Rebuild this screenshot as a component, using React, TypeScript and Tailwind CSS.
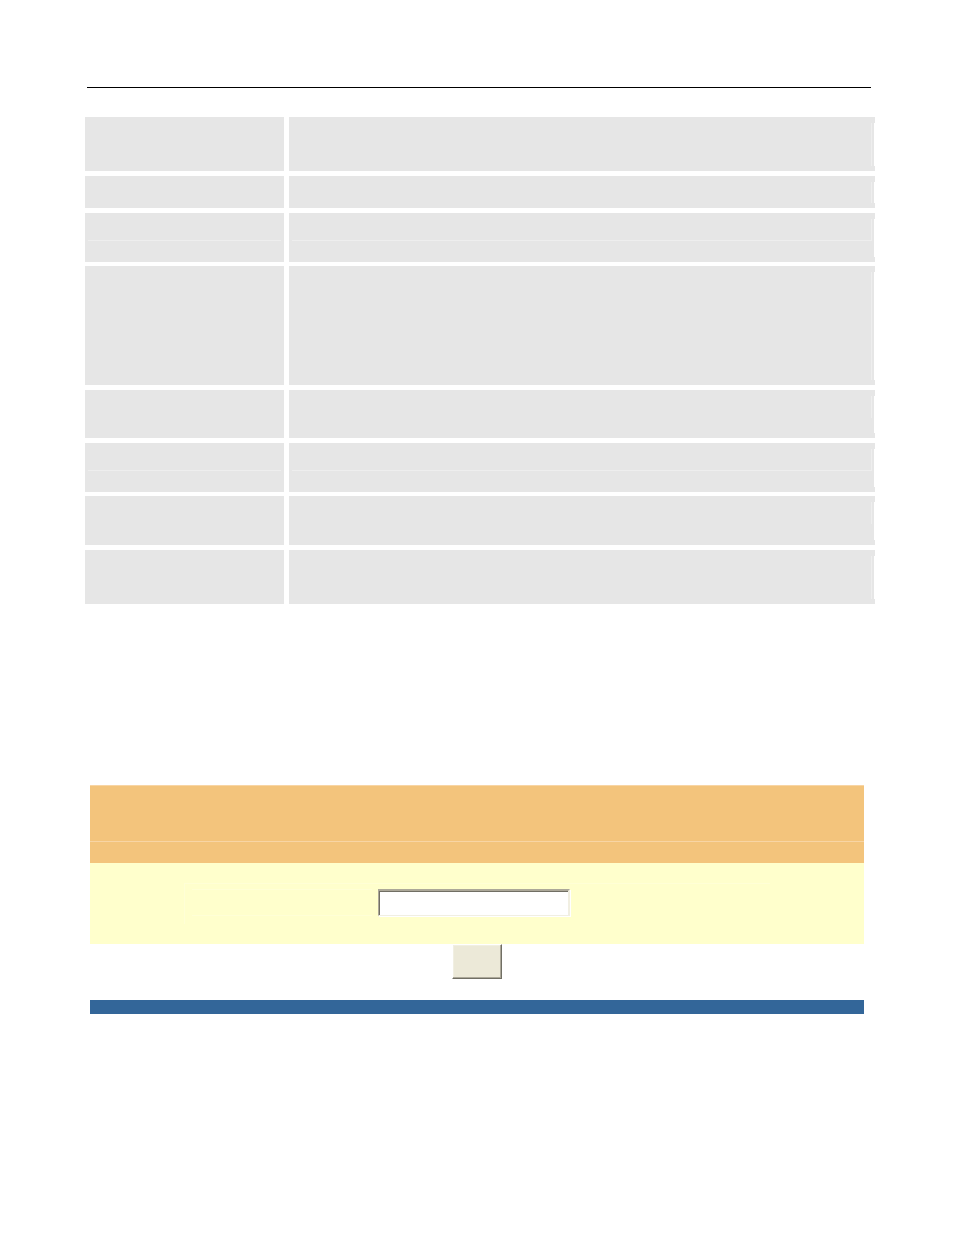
const rows = [
  { height: "h-[54px]", gap: "border-b-[5px]", edge: "h-full" },
  { height: "h-[32px]", gap: "border-b-[5px]", edge: "h-full" },
  { height: "h-[49px]", gap: "border-b-[4px]", edge: "h-[22px]", split: true },
  { height: "h-[119px]", gap: "border-b-[5px]", edge: "h-full" },
  { height: "h-[48px]", gap: "border-b-[5px]", edge: "h-[22px]" },
  { height: "h-[49px]", gap: "border-b-[4px]", edge: "h-[22px]", split: true },
  { height: "h-[49px]", gap: "border-b-[5px]", edge: "h-[22px]" },
  { height: "h-[54px]", gap: "border-b-0", edge: "h-full" },
];

function SettingsTable() {
  return (
    <table className="mt-[29px] w-full table-fixed border-separate border-spacing-0">
      <tbody>
        {rows.map((row, i) => (
          <tr key={i}>
            <td className={`w-[204px] border-r-[5px] border-white p-0 ${row.gap}`}>
              <div className={`bg-[#e6e6e6] px-[3px] pt-[6px] ${row.height}`}>
                {row.split && <div className="h-[22px] border-b border-[#eeeeee]" />}
              </div>
            </td>
            <td className={`border-white p-0 ${row.gap}`}>
              <div className={`bg-[#e6e6e6] pt-[6px] pb-[5px] pl-[3px] ${row.height}`}>
                <div className="h-full border-r border-white pr-[2px]">
                  <div
                    className={`border-r border-[#eeeeee] ${row.edge} ${row.split ? "border-b" : ""}`}
                  />
                </div>
              </div>
            </td>
          </tr>
        ))}
      </tbody>
    </table>
  );
}

function EntryForm() {
  return (
    <form className="mt-[181px] mr-[11px] ml-[5px]" onSubmit={(e) => e.preventDefault()}>
      {/* Heading band */}
      <div className="h-[57px] border-y border-[#f8d5a4] bg-[#f3c47c]" />
      <div className="h-[21px] bg-[#f3c47c]" />

      {/* Field */}
      <div className="h-[81px] bg-[#ffffcc] px-[94px] pt-[20px]">
        <div className="flex h-[41px] gap-[6px] border-t border-l border-[#ffffd6] pt-[5px] pl-[7px]">
          <label htmlFor="entry" className="h-[27px] w-[180px] border-y border-[#ffffd6]" />
          <input
            id="entry"
            type="text"
            aria-label="Value"
            className="h-[27px] w-[192px] border-t-2 border-r-2 border-b border-l border-t-[#aca899] border-r-[#f1efe2] border-b-[#f1efe2] border-l-[#aca899] bg-white px-1 shadow-[1px_1px_0_#ffffff,inset_1px_1px_0_#716f64] outline-none"
          />
        </div>
      </div>

      {/* Submit */}
      <div className="flex justify-center">
        <button
          type="submit"
          aria-label="Submit"
          className="h-[35px] w-[50px] border-t border-r border-b border-l border-t-white border-r-[#716f64] border-b-[#716f64] border-l-white bg-[#ece9d8] shadow-[inset_-1px_-1px_0_#aca899,inset_1px_1px_0_#f1efe2]"
        />
      </div>

      <div className="mt-[21px] h-[14px] bg-[#336699]" />
    </form>
  );
}

export default function App() {
  return (
    <main className="min-h-screen bg-white pt-[87px] pr-[79px] pb-[87px] pl-[85px]">
      <hr className="mr-[4px] ml-[2px] border-t border-black" />
      <SettingsTable />
      <EntryForm />
    </main>
  );
}
